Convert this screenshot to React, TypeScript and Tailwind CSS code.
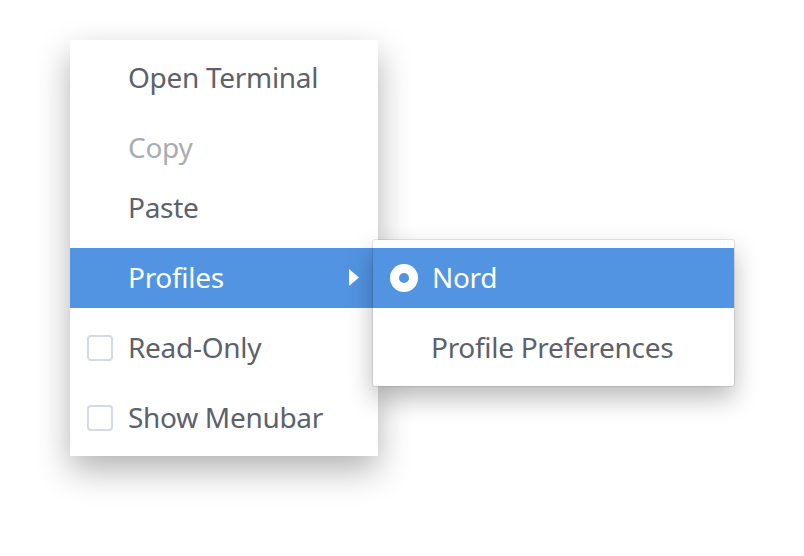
import React from 'react';

const font = { fontFamily: '"Noto Sans", "Open Sans", sans-serif' };

function Row({ children, active, disabled, check }: { children: React.ReactNode; active?: boolean; disabled?: boolean; check?: boolean }) {
  return (
    <div
      className={`relative h-[60px] flex items-center pl-[58px] pr-5 text-[28px] tracking-[-0.3px] ${
        active ? 'bg-[#5294e2] text-white' : disabled ? 'text-[#a9acb2]' : 'text-[#5c616c]'
      }`}
    >
      {check && (
        <span className="absolute left-[17px] top-[17px] w-[26px] h-[26px] rounded-[4px] border-2 border-[#d3dae5] bg-white" />
      )}
      <span className="leading-none -mt-[3px]">{children}</span>
    </div>
  );
}

function Sep() {
  return <div className="h-[10px]" />;
}

export default function App() {
  return (
    <div className="relative w-[804px] h-[556px] bg-white overflow-hidden" style={font}>
      <div className="pt-[40px] pl-[70px]">
        {/* main menu */}
        <div className="w-[308px] bg-white py-2 shadow-[0_14px_32px_rgba(0,0,0,0.3)]">
          <Row>Open Terminal</Row>
          <Sep />
          <Row disabled>Copy</Row>
          <Row>Paste</Row>
          <Sep />
          <div className="relative">
            <Row active>Profiles</Row>
            <svg className="absolute left-[279px] top-[21px]" width="10" height="17" viewBox="0 0 10 17">
              <path d="M0 0 L10 8.5 L0 17 Z" fill="#fff" />
            </svg>
          </div>
          <Sep />
          <Row check>Read-Only</Row>
          <Sep />
          <Row check>Show Menubar</Row>
        </div>
      </div>

      {/* submenu */}
      <div className="absolute left-[373px] top-[240px] w-[361px] bg-white py-2 rounded-[2px] shadow-[0_0_0_1px_rgba(0,0,0,0.09),0_12px_26px_rgba(0,0,0,0.28)]">
        <div className="relative h-[60px] flex items-center pl-[59px] bg-[#5294e2] text-white text-[28px] tracking-[-0.3px]">
          <span className="absolute left-[17px] top-[16px] w-[28px] h-[28px] rounded-full bg-white flex items-center justify-center">
            <span className="w-[10px] h-[10px] rounded-full bg-[#5294e2]" />
          </span>
          <span className="leading-none -mt-[3px]">Nord</span>
        </div>
        <Sep />
        <div className="h-[60px] flex items-center pl-[58px] text-[#5c616c] text-[28px] tracking-[-0.3px]">
          <span className="leading-none -mt-[3px]">Profile Preferences</span>
        </div>
      </div>
    </div>
  );
}
